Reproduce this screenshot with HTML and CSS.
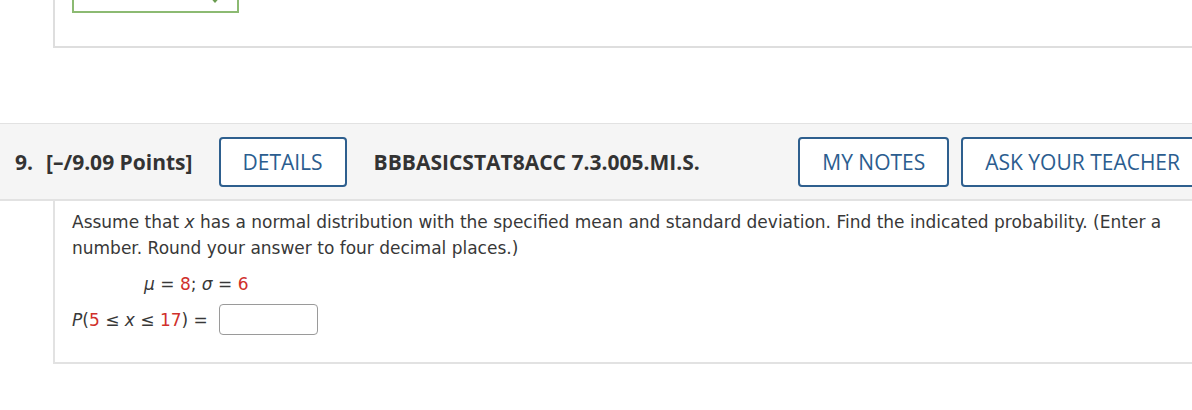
FILE: index.html
```html
<!DOCTYPE html>
<html>
<head>
<meta charset="utf-8">
<link rel="stylesheet" href="styles.css">
</head>
<body>
<div class="page">
  <div class="prev-panel">
    <div class="select-box"><span class="chev"></span></div>
  </div>

  <section class="question">
    <header class="q-head">
      <span class="q-num">9.</span>
      <span class="q-points">[–/9.09 Points]</span>
      <button class="btn btn-details">DETAILS</button>
      <span class="q-code">BBBASICSTAT8ACC 7.3.005.MI.S.</span>
      <div class="q-actions">
        <button class="btn">MY NOTES</button>
        <button class="btn">ASK YOUR TEACHER</button>
      </div>
    </header>
    <div class="q-body">
      <p class="q-text">Assume that <i>x</i> has a normal distribution with the specified mean and standard deviation. Find the indicated probability. (Enter a number. Round your answer to four decimal places.)</p>
      <div class="math given"><i>μ</i> = <span class="red">8</span>; <i>σ</i> = <span class="red">6</span></div>
      <div class="math answer"><i>P</i>(<span class="red">5</span> ≤ <i>x</i> ≤ <span class="red">17</span>) = <span class="input"></span></div>
    </div>
  </section>
</div>
</body>
</html>
```

FILE: styles.css
```css
html, body {
  margin: 0;
  padding: 0;
  background: #ffffff;
  overflow: hidden;
}

.page {
  width: 1216px;
}

.prev-panel {
  margin-left: 53px;
  height: 46px;
  border-left: 2px solid #dedede;
  border-bottom: 2px solid #dedede;
  display: flex;
  align-items: flex-end;
}

.select-box {
  margin-left: 17px;
  margin-bottom: 33px;
  width: 163px;
  height: 28px;
  border: 2px solid #8cba72;
  border-top: none;
  position: relative;
}

.chev {
  position: absolute;
  right: 18px;
  bottom: 10px;
  width: 6px;
  height: 6px;
  border-right: 2px solid #6a9c50;
  border-bottom: 2px solid #6a9c50;
  transform: rotate(45deg);
}

.question {
  margin-top: 75px;
}

.q-head {
  display: flex;
  align-items: center;
  height: 75px;
  padding: 0 12px 0 15px;
  background: #f5f5f5;
  border-top: 1px solid #e2e2e2;
  border-bottom: 2px solid #e2e2e2;
  font-family: "Open Sans", "Liberation Sans", sans-serif;
  font-size: 21px;
  color: #333333;
}

.q-num {
  font-weight: 700;
  margin-right: 13px;
}

.q-points {
  font-weight: 700;
  margin-right: 26px;
}

.btn {
  font-family: "Open Sans", "Liberation Sans", sans-serif;
  font-size: 21px;
  font-weight: 500;
  color: #2b5d8f;
  background: #ffffff;
  border: 2px solid #2e5f8e;
  border-radius: 4px;
  height: 50px;
  padding: 0 22px;
  cursor: pointer;
}

.btn-details {
  margin-right: 27px;
}

.q-code {
  font-weight: 700;
}

.q-actions {
  margin-left: auto;
  display: flex;
  gap: 12px;
}

.q-body {
  margin-left: 53px;
  border-left: 2px solid #e2e2e2;
  border-bottom: 2px solid #e2e2e2;
  padding: 8px 0 27px 17px;
  font-family: "DejaVu Sans", Verdana, sans-serif;
  font-size: 17px;
  line-height: 26px;
  color: #383838;
}

.q-text {
  margin: 0;
  width: 1110px;
}

.math {
  display: flex;
  align-items: center;
  white-space: pre;
}

.given {
  margin-top: 10px;
  padding-left: 72px;
}

.answer {
  margin-top: 7px;
}

.red {
  color: #d0302b;
}

.input {
  display: inline-block;
  width: 97px;
  height: 29px;
  border: 1px solid #9a9a9a;
  border-radius: 4px;
  margin-left: 6px;
  background: #ffffff;
}
```
